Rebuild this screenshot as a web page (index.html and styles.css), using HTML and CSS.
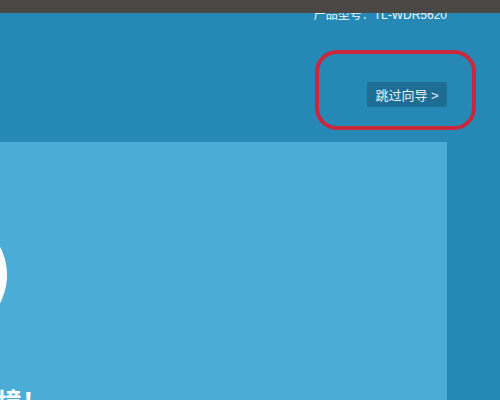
FILE: index.html
```html
<!DOCTYPE html>
<html lang="zh-CN">
<head>
    <meta charset="UTF-8">
    <meta name="viewport" content="width=device-width, initial-scale=1.0">
    <title>设置向导</title>
    <link rel="stylesheet" href="styles.css">
</head>
<body>
    <div class="topbar"></div>

    <div class="header">
        <div class="model">产品型号：TL-WDR5620</div>
        <div class="actions">
            <button class="skip">跳过向导 &gt;</button>
        </div>
    </div>

    <div class="main">
        <div class="panel">
            <div class="logo"></div>
            <div class="welcome">欢迎使用无线网络环境！</div>
        </div>
        <div class="gutter"></div>
    </div>

    <!-- annotation ring -->
    <div class="mark"></div>
</body>
</html>
```

FILE: styles.css
```css
html, body {
    margin: 0;
    padding: 0;
}

body {
    width: 500px;
    height: 400px;
    overflow: hidden;
    position: relative;
    background: #2688b4;
    font-family: "Liberation Sans", "Noto Sans CJK SC", sans-serif;
    color: #fff;
}

.topbar {
    position: absolute;
    top: 0;
    left: 0;
    right: 0;
    height: 13px;
    background: #4a4745;
    z-index: 2;
}

.header {
    height: 142px;
    padding-right: 53px;
    box-sizing: border-box;
    padding-top: 7px;
}

.model {
    font-size: 12px;
    line-height: 16px;
    text-align: right;
    color: #f2f8fb;
}

.actions {
    display: flex;
    justify-content: flex-end;
    margin-top: 59px;
}

.skip {
    background: #1e6e93;
    color: #e6f1f6;
    border: none;
    border-radius: 2px;
    height: 25px;
    width: 80px;
    padding: 0;
    font-family: inherit;
    font-size: 13px;
    cursor: pointer;
}

.main {
    display: flex;
    height: 258px;
}

.panel {
    flex: 1;
    background: #4badd7;
    overflow: hidden;
}

.gutter {
    width: 53px;
    background: #2688b4;
}

.logo {
    width: 120px;
    height: 120px;
    border-radius: 50%;
    background: #fff;
    margin-left: -113px;
    margin-top: 73px;
}

.welcome {
    font-size: 25px;
    font-weight: bold;
    line-height: 30px;
    white-space: nowrap;
    margin-top: 52px;
    margin-left: -228px;
}

.mark {
    position: absolute;
    left: 315px;
    top: 50px;
    width: 161px;
    height: 80px;
    box-sizing: border-box;
    border: 4px solid #c9283c;
    border-radius: 22px;
}
```
